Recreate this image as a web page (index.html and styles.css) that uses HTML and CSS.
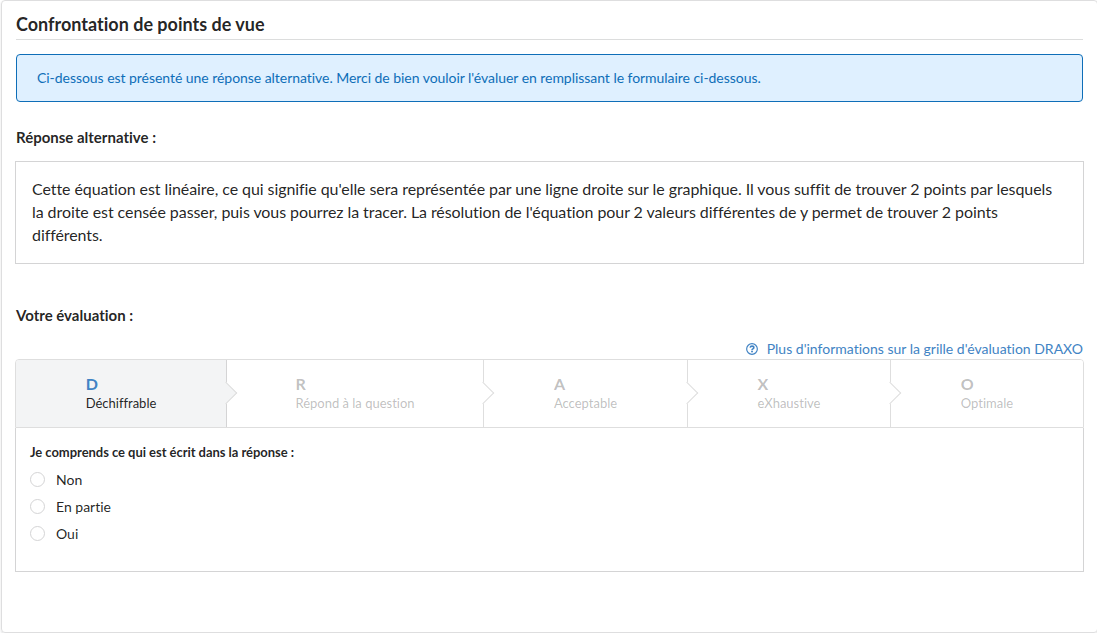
FILE: index.html
```html
<!DOCTYPE html>
<html lang="fr">
<head>
<meta charset="utf-8">
<title>Confrontation de points de vue</title>
<link rel="stylesheet" href="styles.css">
</head>
<body>
<main class="card">
  <h1 class="title">Confrontation de points de vue</h1>
  <div class="message">Ci-dessous est présenté une réponse alternative. Merci de bien vouloir l'évaluer en remplissant le formulaire ci-dessous.</div>
  <h2 class="heading">Réponse alternative :</h2>
  <div class="answer">Cette équation est linéaire, ce qui signifie qu'elle sera représentée par une ligne droite sur le graphique. Il vous suffit de trouver 2 points par lesquels la droite est censée passer, puis vous pourrez la tracer. La résolution de l'équation pour 2 valeurs différentes de y permet de trouver 2 points différents.</div>
  <h2 class="heading evaluation">Votre évaluation :</h2>
  <a class="help"><svg class="help-icon" viewBox="0 0 512 512"><circle cx="256" cy="256" r="228" fill="none" stroke="currentColor" stroke-width="50"/><path d="M176 202c8-45 38-68 80-68 46 0 79 27 79 65 0 54-78 52-78 98" fill="none" stroke="currentColor" stroke-width="66"/><circle cx="257" cy="362" r="42" fill="currentColor"/></svg><span>Plus d'informations sur la grille d'évaluation DRAXO</span></a>
  <div class="steps">
    <div class="step active s1"><div><b>D</b><span>Déchiffrable</span></div></div>
    <div class="step s2"><div><b>R</b><span>Répond à la question</span></div></div>
    <div class="step s3"><div><b>A</b><span>Acceptable</span></div></div>
    <div class="step s4"><div><b>X</b><span>eXhaustive</span></div></div>
    <div class="step s5"><div><b>O</b><span>Optimale</span></div></div>
  </div>
  <form class="panel">
    <div class="question">Je comprends ce qui est écrit dans la réponse :</div>
    <label class="option"><input type="radio" name="d">Non</label>
    <label class="option"><input type="radio" name="d">En partie</label>
    <label class="option"><input type="radio" name="d">Oui</label>
  </form>
</main>
</body>
</html>
```
FILE: styles.css
```css
* { box-sizing: border-box; }
body { margin: 0; overflow: hidden; font: 14px/20px Lato, sans-serif; font-variant-ligatures: none; color: rgba(0,0,0,.87); background: #fff; }
.card { height: 633px; width: 1097px; margin-left: 1px; border: 1px solid #dededf; border-radius: 4px; padding: 12px 13px 0; box-shadow: 0 1px 2px rgba(34,36,38,.15); }
.title { margin: 0 1px; height: 27px; font-size: 18px; line-height: 23px; border-bottom: 1px solid #dcdddd; }
.message { margin: 14px 1px 0; height: 48px; border: 1px solid #0e6eb8; border-radius: 4px; background: #dff0ff; color: #0e6eb8; padding: 13px 20px; letter-spacing: -.045px; }
.heading { margin: 25px 1px 0; font-size: 15px; line-height: 20px; }
.answer { margin-top: 14px; height: 103px; border: 1px solid #d4d4d5; padding: 15px 16px; font-size: 16px; line-height: 23px; letter-spacing: -.075px; }
.evaluation { margin-top: 41px; }
.help { display: flex; justify-content: flex-end; align-items: center; height: 20px; margin: 14px 1px 0; color: #4183c4; }
.help-icon { width: 12px; height: 12px; margin-right: 9px; }
.steps { display: flex; height: 69px; border: 1px solid #dedede; border-radius: 4px 4px 0 0; }
.step { position: relative; display: flex; align-items: center; justify-content: center; border-right: 1px solid #dedede; padding-bottom: 2px; color: rgba(40,40,40,.3); background: #fff; font-size: 13px; line-height: 18px; }
.step:last-child { border-right: 0; border-radius: 0 3px 0 0; }
.step b, .step span { display: block; }
.step b { font-size: 16px; line-height: 20px; }
.step:not(:last-child)::after { content: ""; position: absolute; z-index: 1; right: -8px; top: 25px; width: 15px; height: 15px; background: inherit; border: 1px solid #dedede; border-width: 0 1px 1px 0; transform: rotate(-45deg); }
.active { background: #f3f4f5; color: rgba(0,0,0,.87); border-right-color: #d4d4d5; border-radius: 3px 0 0 0; }
.active b { color: #4183c4; }
.s1 { width: 211px; } .s2 { width: 257px; } .s3 { width: 204px; } .s4 { width: 203px; } .s5 { flex: 1; }
.panel { border: 1px solid #d4d4d5; border-top: 0; height: 144px; padding: 14px; }
.question { font-weight: 700; font-size: 13px; line-height: 20px; margin-bottom: 8px; letter-spacing: -.045px; }
.option { display: flex; align-items: center; height: 20px; margin-bottom: 7px; }
.option input { appearance: none; width: 15px; height: 15px; border: 1px solid #d4d4d5; border-radius: 50%; margin: 0 11px 2px 0; background: #fff; }
```
